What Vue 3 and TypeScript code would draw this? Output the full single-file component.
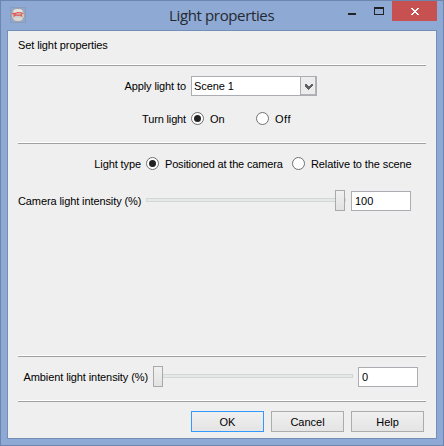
<script setup lang="ts">
import { ref } from 'vue'

const scene = ref('Scene 1')
const power = ref<'on' | 'off'>('on')
const lightType = ref<'camera' | 'scene'>('camera')
const cameraIntensity = ref('100')
const ambientIntensity = ref('0')

const thumbOffset = (value: string) => `${(Number(value) / 100) * 189}px`
</script>

<template>
  <div class="window">
    <header class="titlebar">
      <svg class="app-icon" width="16" height="16" viewBox="0 0 16 16">
        <rect x=".5" y=".5" width="15" height="15" fill="#8fa8cf" stroke="#8a9dc0" />
        <circle cx="8" cy="8" r="6.7" fill="#cbc9c9" stroke="#a19e9e" stroke-width=".9" />
        <ellipse cx="8" cy="4" rx="4.6" ry="2" fill="#e4e3e2" />
        <ellipse cx="8" cy="12" rx="4.4" ry="1.8" fill="#dad8d6" />
        <path d="M2 6.6h3l2.5-1.1 3.5.3 2.5 1M3.5 8.1h8.5M5.5 7l-1.8 2.6M11 7l.8 2.6" fill="none" stroke="#e25552" stroke-width="1.1" />
      </svg>
      <h1 class="title">Light properties</h1>
      <svg class="minimize" width="8" height="8" viewBox="0 0 8 8" shape-rendering="crispEdges">
        <rect x="0" y="6" width="8" height="2" fill="#222226" />
      </svg>
      <svg class="maximize" width="10" height="8" viewBox="0 0 10 8" shape-rendering="crispEdges">
        <path d="M0 0h10v8H0zM1 2v5h8V2z" fill="#222226" fill-rule="evenodd" />
      </svg>
      <button class="close" aria-label="Close">
        <svg width="8" height="7" viewBox="0 0 8 7" shape-rendering="crispEdges">
          <path d="M0 0h2v1h1v1h2V1h1V0h2v1H7v1H6v1H5v1h1v1h1v1h1v1H6V6H5V5H3v1H2v1H0V6h1V5h1V4h1V3H2V2H1V1H0z" fill="#fff" />
        </svg>
      </button>
    </header>

    <main class="client">
      <p class="intro">Set light properties</p>
      <div class="rule"></div>

      <section class="target">
        <div class="row scene-row">
          <span class="label">Apply light to</span>
          <div class="combo">
            <span class="combo-value">{{ scene }}</span>
            <span class="combo-button">
              <svg width="8" height="6" viewBox="0 0 8 6" shape-rendering="crispEdges">
                <path d="M0 0h2v1h1v1h2V1h1V0h2v2H7v1H6v1H5v1H4v1H3V5H2V4H1V3H0z" fill="#606064" />
              </svg>
            </span>
          </div>
        </div>
        <div class="row power-row">
          <span class="label">Turn light</span>
          <span class="radio" :class="{ checked: power === 'on' }" @click="power = 'on'"></span>
          <span class="choice on">On</span>
          <span class="radio" :class="{ checked: power === 'off' }" @click="power = 'off'"></span>
          <span class="choice off">Off</span>
        </div>
      </section>
      <div class="rule"></div>

      <section class="camera">
        <div class="row type-row">
          <span class="label">Light type</span>
          <span class="radio" :class="{ checked: lightType === 'camera' }" @click="lightType = 'camera'"></span>
          <span class="choice positioned">Positioned at the camera</span>
          <span class="radio" :class="{ checked: lightType === 'scene' }" @click="lightType = 'scene'"></span>
          <span class="choice">Relative to the scene</span>
        </div>
        <div class="row intensity-row">
          <span class="label">Camera light intensity (%)</span>
          <div class="slider">
            <div class="track"></div>
            <div class="thumb" :style="{ left: thumbOffset(cameraIntensity) }"></div>
          </div>
          <input v-model="cameraIntensity" class="field" />
        </div>
      </section>
      <div class="rule"></div>

      <section class="ambient">
        <div class="row">
          <span class="label">Ambient light intensity (%)</span>
          <div class="slider">
            <div class="track"></div>
            <div class="thumb" :style="{ left: thumbOffset(ambientIntensity) }"></div>
          </div>
          <input v-model="ambientIntensity" class="field" />
        </div>
      </section>
      <div class="rule"></div>

      <footer class="actions">
        <button class="action primary">OK</button>
        <button class="action">Cancel</button>
        <button class="action">Help</button>
      </footer>
    </main>
  </div>
</template>

<style>
body { margin: 0; overflow: hidden; }
</style>

<style scoped>
* { box-sizing: border-box; }
.window {
  width: 444px;
  height: 446px;
  padding: 0 6px;
  border: 1px solid #6c86b0;
  background: #8da9d4;
  font: 11px/14px "Liberation Sans", Arial, sans-serif;
  letter-spacing: -0.1px;
  color: #000;
}
.titlebar { display: flex; align-items: flex-start; height: 29px; }
.app-icon { margin: 6px 0 0 3px; flex: none; }
.title {
  width: 180px;
  margin: 3px 0 0 143px;
  font: 400 15px/22px "Open Sans", "Noto Sans", sans-serif;
  letter-spacing: -0.36px;
  color: #25282f;
  white-space: nowrap;
}
.minimize { margin: 6px 0 0 -1px; flex: none; }
.maximize { margin: 6px 8px 0 18px; flex: none; }
.close {
  display: flex;
  align-items: center;
  justify-content: center;
  width: 45px;
  height: 20px;
  padding: 0;
  border: 0;
  background: #c75050;
  flex: none;
}
.client {
  width: 430px;
  height: 409px;
  padding: 0 10px;
  border: 1px solid #718fb9;
  background: #efefef;
}
.intro { margin: 0; height: 33px; padding-top: 7px; }
.rule { width: 408px; height: 2px; border-top: 1px solid #fff; border-bottom: 1px solid #a0a0a0; }
.row { display: flex; align-items: center; white-space: nowrap; }
.label { flex: none; text-align: right; margin-right: 5px; }
.target { height: 76px; padding-top: 10px; }
.scene-row { height: 20px; }
.scene-row .label, .power-row .label { width: 168px; }
.power-row { height: 13px; margin-top: 16px; }
.combo { display: flex; width: 126px; height: 20px; border: 1px solid #abadb3; background: #fff; }
.combo-value { width: 108px; padding: 2px 0 0 2px; }
.combo-button {
  display: flex;
  align-items: center;
  justify-content: center;
  width: 16px;
  padding-top: 1px;
  border-left: 1px solid #abadb3;
  background: #ececec;
  box-shadow: inset -1px -1px 0 #b4b4b6;
}
.radio {
  display: grid;
  place-items: center;
  width: 13px;
  height: 13px;
  margin-right: 6px;
  border: 1px solid #707070;
  border-radius: 50%;
  background: #fff;
  flex: none;
}
.radio.checked::after { content: ""; width: 7px; height: 7px; border-radius: 50%; background: #222; }
.choice { flex: none; }
.choice.on { width: 46px; letter-spacing: 0; }
.choice.off { letter-spacing: 0.5px; }
.power-row .label { letter-spacing: -0.15px; }
.camera { height: 211px; padding-top: 13px; }
.type-row { height: 13px; }
.type-row .label { width: 123px; }
.choice.positioned { width: 127px; letter-spacing: -0.17px; }
.intensity-row { margin-top: 20px; height: 22px; }
.intensity-row .label { width: 123px; }
.slider { position: relative; width: 200px; height: 22px; padding-top: 8px; margin-right: 5px; flex: none; }
.track { height: 4px; border: 1px solid #d2d6d6; background: #e5e9e8; }
.thumb {
  position: absolute;
  top: 0;
  width: 10px;
  height: 21px;
  border: 1px solid #a9a9a9;
  background: linear-gradient(#f1f1f1, #e2e2e2);
}
.field {
  width: 60px;
  height: 20px;
  padding: 0 3px;
  border: 1px solid #abadb3;
  background: #fff;
  font: inherit;
  color: #000;
  outline: none;
}
.ambient { height: 43px; padding-top: 9px; }
.ambient .label { width: 130px; }
.actions { display: flex; gap: 7px; padding: 9px 0 0 173px; }
.action {
  width: 73px;
  height: 21px;
  padding: 0;
  border: 1px solid #acacac;
  background: linear-gradient(#f0f0f0, #e4e4e4);
  font: inherit;
  color: #000;
}
.action.primary { border-color: #3399ff; }
</style>
